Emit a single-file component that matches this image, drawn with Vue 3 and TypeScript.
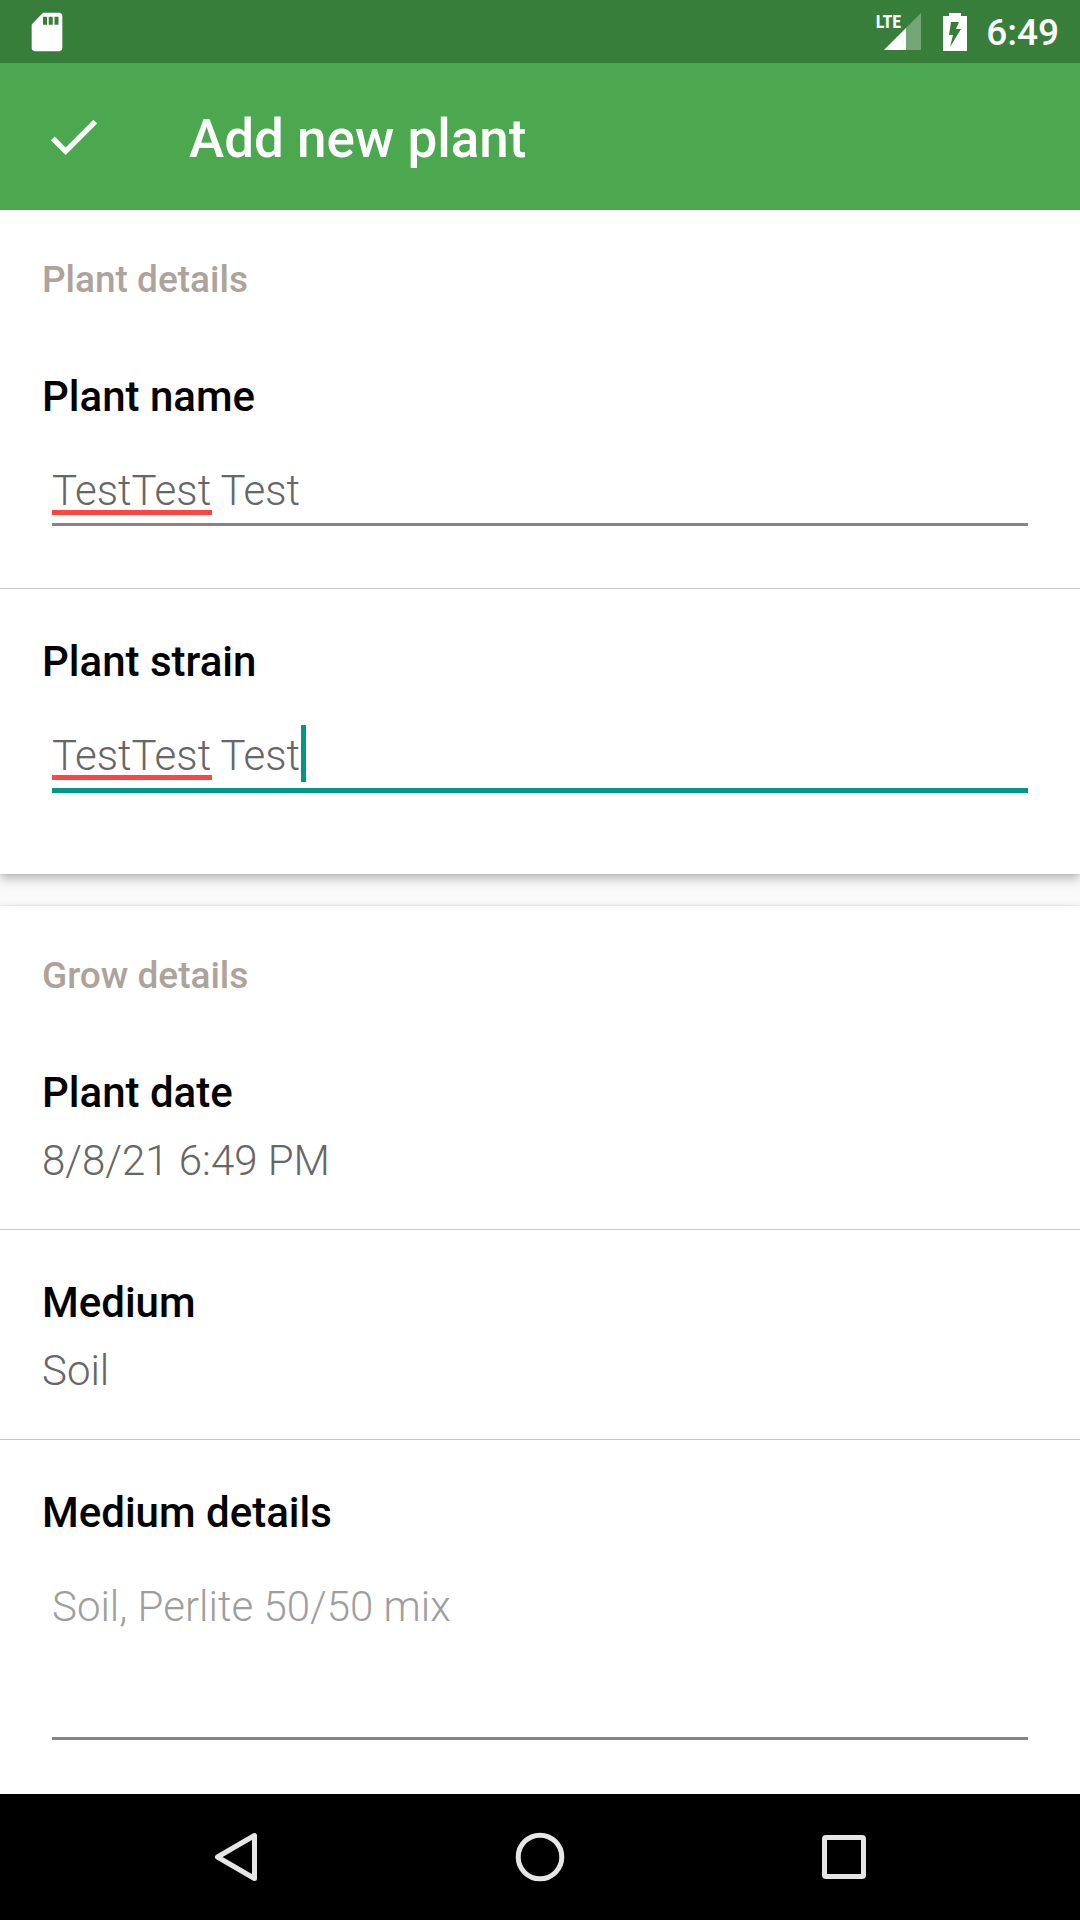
<script setup lang="ts">
import { reactive, ref } from 'vue'

interface Entry {
  id: string
  label: string
  value: string
  misspelled: string
  focused: boolean
}

const entries = reactive<Entry[]>([
  { id: 'plant-name', label: 'Plant name', value: 'TestTest Test', misspelled: 'TestTest', focused: false },
  { id: 'plant-strain', label: 'Plant strain', value: 'TestTest Test', misspelled: 'TestTest', focused: true },
])

const choices = [
  { label: 'Plant date', value: '8/8/21 6:49 PM' },
  { label: 'Medium', value: 'Soil' },
]

const mediumDetails = ref('')

const context = document.createElement('canvas').getContext('2d')

// Width of a run of field text, used to place the spelling mark and the cursor.
function textWidth(text: string): string {
  if (!context) return '0px'
  context.font = '300 42px Roboto'
  return Math.ceil(context.measureText(text).width) + 'px'
}
</script>

<template>
  <div class="screen">
    <header>
      <div class="status-bar">
        <svg class="sd-card" viewBox="0 0 24 24" aria-hidden="true">
          <path fill-rule="evenodd" d="M18.400 2H9.900L4 8.100V20.400c0 .9.700 1.600 1.600 1.600h12.800c.9 0 1.600-.7 1.600-1.600V3.600c0-.9-.7-1.600-1.600-1.600zM12 8.200H9.900V4.100H12zM15 8.200H12.900V4.100H15zM18 8.200H15.900V4.100H18z" />
        </svg>
        <div class="status-right">
          <div class="signal">
            <span class="network">LTE</span>
            <svg viewBox="0 0 37 37" aria-hidden="true">
              <path d="M0 37L37 0V37z" opacity="0.3" />
              <path d="M0 37L22 15V37z" />
            </svg>
          </div>
          <svg class="battery" viewBox="0 0 24 38" aria-hidden="true">
            <path fill-rule="evenodd" d="M6 0H18V3H24V38H0V3H6zM8 9L6 22H10L7 34L18 16H13L16 9z" />
          </svg>
          <span class="time">6:49</span>
        </div>
      </div>
      <div class="toolbar">
        <button class="done" type="button" aria-label="Save plant">
          <svg viewBox="0 0 24 24" aria-hidden="true">
            <path d="M9 16.170L4.830 12l-1.420 1.410L9 19 21 7l-1.410-1.410z" />
          </svg>
        </button>
        <h1>Add new plant</h1>
      </div>
    </header>

    <main>
      <section class="card">
        <h2>Plant details</h2>
        <div v-for="entry in entries" :key="entry.id" class="row">
          <label class="label" :for="entry.id">{{ entry.label }}</label>
          <div class="field">
            <input :id="entry.id" v-model="entry.value" type="text" spellcheck="false" :class="{ focused: entry.focused }" />
            <span class="spelling" :style="{ width: textWidth(entry.misspelled) }"></span>
            <span v-if="entry.focused" class="cursor" :style="{ left: textWidth(entry.value) }"></span>
          </div>
        </div>
      </section>

      <section class="card grow">
        <h2>Grow details</h2>
        <button v-for="choice in choices" :key="choice.label" class="row choice" type="button">
          <span class="label">{{ choice.label }}</span>
          <span class="value">{{ choice.value }}</span>
        </button>
        <div class="row">
          <label class="label" for="medium-details">Medium details</label>
          <div class="field">
            <textarea id="medium-details" v-model="mediumDetails" rows="3" placeholder="Soil, Perlite 50/50 mix"></textarea>
          </div>
        </div>
      </section>
    </main>

    <nav>
      <button type="button" aria-label="Back">
        <svg viewBox="0 0 50 50" aria-hidden="true"><path d="M43.500 3.500V46.500L6.500 25z" /></svg>
      </button>
      <button type="button" aria-label="Home">
        <svg viewBox="0 0 50 50" aria-hidden="true"><circle cx="25" cy="25" r="21.800" /></svg>
      </button>
      <button type="button" aria-label="Recent apps">
        <svg viewBox="0 0 50 50" aria-hidden="true"><rect x="5.500" y="5.500" width="39" height="39" rx="1.500" /></svg>
      </button>
    </nav>
  </div>
</template>

<style>
body {
  margin: 0;
}
</style>

<style scoped>
.screen {
  display: flex;
  flex-direction: column;
  min-height: 100vh;
  background: #fafafa;
  font-family: Roboto, sans-serif;
  font-size: 42px;
  line-height: 49px;
}

button,
input,
textarea {
  box-sizing: border-box;
  margin: 0;
  padding: 0;
  border: 0;
  border-radius: 0;
  outline: 0;
  background: none;
  font: inherit;
  text-align: left;
}

svg {
  display: block;
  fill: #fff;
}

header {
  position: relative;
  z-index: 1;
  color: #fff;
}

.status-bar {
  display: flex;
  align-items: center;
  justify-content: space-between;
  height: 63px;
  padding: 0 21px 0 24px;
  background: #387e3b;
}

.sd-card {
  width: 46px;
  height: 46px;
}

.status-right {
  display: flex;
  align-items: center;
}

.signal {
  position: relative;
  margin-right: 22px;
}

.signal svg {
  width: 37px;
  height: 37px;
}

.network {
  position: absolute;
  right: 20px;
  top: -1px;
  font-family: 'Roboto Condensed', 'Liberation Sans Narrow', Roboto, sans-serif;
  font-size: 18px;
  font-weight: 700;
  line-height: 20px;
}

.battery {
  width: 24px;
  height: 38px;
  margin-right: 19px;
}

.time {
  padding-top: 2px;
  font-size: 37px;
  font-weight: 500;
  line-height: 44px;
}

.toolbar {
  display: flex;
  align-items: center;
  gap: 84px;
  height: 147px;
  padding: 0 42px;
  background: #4ba84e;
}

.done,
.done svg {
  width: 63px;
  height: 63px;
}

h1 {
  margin: 0;
  padding-top: 4px;
  font-size: 53px;
  font-weight: 500;
  line-height: 62px;
}

main {
  display: flex;
  flex: 1;
  flex-direction: column;
  gap: 32px;
  overflow: hidden;
}

.card {
  background: #fff;
  box-shadow: 0 5px 10px rgba(0, 0, 0, 0.26), 0 0 2px rgba(0, 0, 0, 0.12);
}

.grow {
  flex: 1;
}

h2 {
  margin: 0;
  padding: 48px 42px 22px;
  color: #ada39b;
  font-size: 37px;
  font-weight: 500;
  line-height: 44px;
}

.row {
  display: flex;
  flex-direction: column;
  padding: 48px 42px 60px;
  border-bottom: 1px solid #c8c8c8;
}

.row:last-child {
  padding-bottom: 81px;
  border-bottom: 0;
}

.grow .row:last-child {
  padding-bottom: 54px;
}

.choice {
  width: 100%;
  gap: 19px;
  padding-bottom: 44px;
  border-bottom: 1px solid #c8c8c8;
}

.label {
  color: #000;
  font-weight: 500;
}

.value {
  color: #666;
  font-weight: 300;
}

.field {
  position: relative;
  min-height: 62px;
  margin: 45px 10px 0;
}

input,
textarea {
  display: block;
  width: 100%;
  padding-bottom: 8px;
  border-bottom: 3px solid #858585;
  color: #666;
  font-weight: 300;
  caret-color: transparent;
}

input {
  height: 60px;
}

input.focused {
  height: 62px;
  border-bottom: 5px solid #009688;
}

textarea {
  height: 158px;
  overflow: hidden;
  resize: none;
}

textarea::placeholder {
  color: #9e9e9e;
  opacity: 1;
}

.spelling {
  position: absolute;
  top: 44px;
  left: 0;
  height: 5px;
  background: #ff4444;
}

.cursor {
  position: absolute;
  top: -6px;
  width: 5px;
  height: 57px;
  background: #009688;
}

nav {
  display: flex;
  justify-content: center;
  height: 126px;
  background: #000;
}

nav button {
  display: flex;
  flex: 0 1 304px;
  align-items: center;
  justify-content: center;
}

nav svg {
  width: 50px;
  height: 50px;
  fill: none;
  stroke: #e6e6e6;
  stroke-width: 5;
  stroke-linejoin: round;
}
</style>
